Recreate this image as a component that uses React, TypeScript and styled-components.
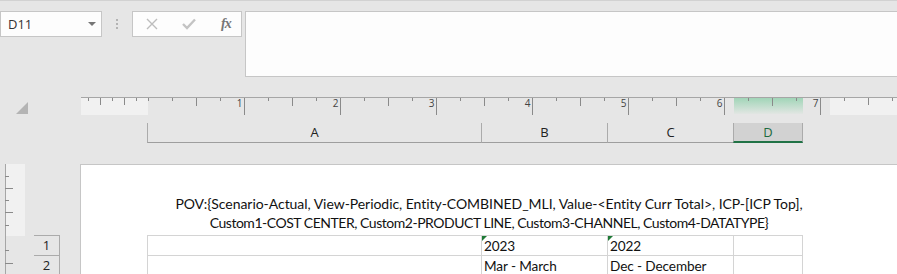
import React from 'react';
import styled, { createGlobalStyle, css } from 'styled-components';

const GlobalStyle = createGlobalStyle`
  html, body {
    margin: 0;
    padding: 0;
    background: #e6e6e6;
    overflow: hidden;
  }
  body {
    font-family: "Open Sans", "Noto Sans", sans-serif;
    color: #222;
  }
`;

const Window = styled.div`
  width: 897px;
  height: 274px;
  border-top: 1px solid #d2d2d2;
  box-sizing: border-box;
  background: #e6e6e6;
  overflow: hidden;
`;

// ---- formula bar ----

const FormulaBar = styled.div`
  display: flex;
  align-items: flex-start;
  padding-top: 10px;
`;

const Box = css`
  box-sizing: border-box;
  height: 26px;
  border: 1px solid #c6c6c6;
  background: #fdfdfd;
`;

const NameBox = styled.div`
  ${Box};
  width: 102px;
  display: flex;
  align-items: center;
  justify-content: space-between;
  padding: 0 5px 0 7px;
  font-size: 13px;
  color: #333;
`;

const Caret = styled.span`
  width: 0;
  height: 0;
  border-left: 4px solid transparent;
  border-right: 4px solid transparent;
  border-top: 4px solid #767676;
  margin-top: -1px;
`;

const Grip = styled.div`
  width: 30px;
  height: 26px;
  display: flex;
  flex-direction: column;
  align-items: center;
  padding-top: 8px;
  box-sizing: border-box;
  gap: 2px;
`;

const GripDot = styled.span`
  width: 2px;
  height: 2px;
  background: #b3b3b3;
`;

const FxButtons = styled.div`
  ${Box};
  width: 110px;
  display: flex;
  align-items: center;
  padding-left: 13px;
  gap: 24px;
`;

const FxLabel = styled.span`
  font-family: "Liberation Serif", "DejaVu Serif", serif;
  font-style: italic;
  font-weight: bold;
  font-size: 14px;
  color: #767676;
  letter-spacing: -1px;
  margin-left: 1px;
`;

const FormulaInput = styled.div`
  ${Box};
  height: 66px;
  flex: 1;
  margin-left: 3px;
  border-right: none;
`;

// ---- ruler & column headers ----

const RulerRow = styled.div`
  display: flex;
  margin-top: 20px;
  height: 18px;
`;

const Corner = styled.div`
  width: 81px;
  padding: 5px 0 0 16px;
  box-sizing: border-box;
`;

const SelectAll = styled.div`
  width: 0;
  height: 0;
  border-left: 12px solid transparent;
  border-bottom: 12px solid #b4b4b4;
`;

const ColumnHeaders = styled.div`
  display: flex;
  margin-top: 8px;
  height: 20px;
  padding-left: 147px;
`;

const ColHeader = styled.div<{ $w: number; $selected?: boolean }>`
  box-sizing: border-box;
  width: ${(p) => p.$w}px;
  border-left: 1px solid #ababab;
  border-bottom: ${(p) => (p.$selected ? '2px solid #217346' : '1px solid #9e9e9e')};
  border-right: ${(p) => (p.$selected ? '1px solid #ababab' : 'none')};
  background: ${(p) => (p.$selected ? '#d2d2d2' : 'transparent')};
  color: ${(p) => (p.$selected ? '#1d6b40' : '#222')};
  font-size: 13px;
  display: flex;
  align-items: center;
  justify-content: center;
  padding-bottom: ${(p) => (p.$selected ? 0 : 1)}px;
`;

// ---- sheet ----

const SheetArea = styled.div`
  display: flex;
  height: 131px;
`;

const RowHeaders = styled.div`
  width: 26px;
  padding-top: 92px;
  display: flex;
  flex-direction: column;
`;

const RowHeader = styled.div`
  box-sizing: border-box;
  height: 20px;
  border-top: 1px solid #ababab;
  border-right: 1px solid #ababab;
  font-size: 13px;
  display: flex;
  align-items: center;
  justify-content: center;
  color: #222;
`;

const Page = styled.div`
  flex: 1;
  margin: 21px 0 0 20px;
  background: #fff;
  border-left: 1px solid #c6c6c6;
  border-top: 1px solid #c6c6c6;
  padding-left: 66px;
  font-family: "Lato", "Open Sans", sans-serif;
  font-size: 14px;
  color: #111;
`;

const PageHeader = styled.div`
  width: 684px;
  height: 70px;
  box-sizing: border-box;
  padding-top: 29px;
  text-align: center;
  line-height: 19px;
`;

const HeaderLine = styled.div<{ $spacing: number }>`
  letter-spacing: ${(p) => p.$spacing}px;
  white-space: nowrap;
`;

const GridRow = styled.div`
  display: flex;
  height: 20px;
`;

const Cell = styled.div<{ $w: number; $last?: boolean; $note?: boolean }>`
  position: relative;
  box-sizing: border-box;
  width: ${(p) => p.$w}px;
  border-left: 1px solid #d4d4d4;
  border-top: 1px solid #d4d4d4;
  border-right: ${(p) => (p.$last ? '1px solid #d4d4d4' : 'none')};
  padding-left: 2px;
  line-height: 20px;
  font-size: 13.6px;
  letter-spacing: -0.1px;
  white-space: nowrap;

  ${(p) =>
    p.$note &&
    css`
      &::before {
        content: '';
        position: absolute;
        left: 0;
        top: 0;
        border-top: 5px solid #1e7a36;
        border-right: 5px solid transparent;
      }
    `}
`;

const columns = [
  { key: 'A', w: 334 },
  { key: 'B', w: 126 },
  { key: 'C', w: 126 },
  { key: 'D', w: 70 },
];

const rows = [
  ['', '2023', '2022', ''],
  ['', 'Mar - March', 'Dec - December', ''],
];

const HorizontalRuler = () => {
  const origin = 67; // 148 - 81
  const ticks: React.ReactElement[] = [];
  for (let k = 0; k <= 28; k++) {
    const x = origin + k * 24 + 0.5;
    const len = k > 0 && k % 4 === 0 ? 17 : k % 2 === 0 && k > 0 ? 8 : 3;
    ticks.push(<line key={'m' + k} x1={x} y1={1} x2={x} y2={1 + len} stroke="#8a8a8a" />);
    if (k > 0 && k % 4 === 0) {
      ticks.push(
        <text key={'t' + k} x={x - 2} y={10} fontSize={10} textAnchor="end" fill="#444"
          fontFamily='"Open Sans", sans-serif'>
          {k / 4}
        </text>
      );
    }
  }
  for (let j = 1; j <= 5; j++) {
    const x = origin - j * 12 + 0.5;
    ticks.push(<line key={'l' + j} x1={x} y1={1} x2={x} y2={j % 2 === 0 ? 8 : 4} stroke="#8a8a8a" />);
  }
  [763, 787, 811].forEach((x, i) =>
    ticks.push(<line key={'r' + i} x1={x + 0.5} y1={1} x2={x + 0.5} y2={i === 1 ? 8 : 4} stroke="#8a8a8a" />)
  );
  return (
    <svg width={816} height={18}>
      <defs>
        <linearGradient id="sel" x1="0" y1="0" x2="0" y2="1">
          <stop offset="0" stopColor="#9dd4b5" />
          <stop offset="1" stopColor="#e2e6e3" />
        </linearGradient>
      </defs>
      <rect x={0} y={0} width={67} height={18} fill="#f1f1f1" />
      <rect x={749} y={0} width={67} height={18} fill="#f1f1f1" />
      <rect x={653} y={0} width={69} height={17} fill="url(#sel)" />
      <line x1={0} y1={0.5} x2={816} y2={0.5} stroke="#a6a6a6" />
      {ticks}
    </svg>
  );
};

const VerticalRuler = () => {
  const ticks = [
    { y: 33, l: 3 },
    { y: 45, l: 7 },
    { y: 57, l: 3 },
    { y: 69, l: 7 },
    { y: 82, l: 3 },
    { y: 107, l: 3 },
    { y: 120, l: 7 },
  ];
  return (
    <svg width={34} height={131}>
      <rect x={6} y={21} width={19} height={72} fill="#f1f1f1" />
      <line x1={5.5} y1={21} x2={5.5} y2={131} stroke="#a6a6a6" />
      {ticks.map((t) => (
        <line key={t.y} x1={5} y1={t.y + 0.5} x2={6 + t.l} y2={t.y + 0.5} stroke="#8a8a8a" />
      ))}
    </svg>
  );
};

const App = () => {
  return (
    <Window>
      <GlobalStyle />
      <FormulaBar>
        <NameBox>
          <span>D11</span>
          <Caret />
        </NameBox>
        <Grip>
          <GripDot />
          <GripDot />
          <GripDot />
        </Grip>
        <FxButtons>
          <svg width={12} height={12} viewBox="0 0 12 12">
            <path d="M1 1 L11 11 M11 1 L1 11" stroke="#bdbdbd" strokeWidth={1.4} fill="none" />
          </svg>
          <svg width={14} height={12} viewBox="0 0 14 12">
            <path d="M1 6 L5 10 L13 1.5" stroke="#c4c4c4" strokeWidth={2.4} fill="none" />
          </svg>
          <FxLabel>fx</FxLabel>
        </FxButtons>
        <FormulaInput />
      </FormulaBar>

      <RulerRow>
        <Corner>
          <SelectAll />
        </Corner>
        <HorizontalRuler />
      </RulerRow>

      <ColumnHeaders>
        {columns.map((c) => (
          <ColHeader key={c.key} $w={c.w} $selected={c.key === 'D'}>
            {c.key}
          </ColHeader>
        ))}
      </ColumnHeaders>

      <SheetArea>
        <VerticalRuler />
        <RowHeaders>
          <RowHeader>1</RowHeader>
          <RowHeader>2</RowHeader>
        </RowHeaders>
        <Page>
          <PageHeader>
            <HeaderLine $spacing={-0.05}>
              POV:{'{'}Scenario-Actual, View-Periodic, Entity-COMBINED_MLI, Value-&lt;Entity Curr Total&gt;, ICP-[ICP Top],
            </HeaderLine>
            <HeaderLine $spacing={-0.47}>
              Custom1-COST CENTER, Custom2-PRODUCT LINE, Custom3-CHANNEL, Custom4-DATATYPE{'}'}
            </HeaderLine>
          </PageHeader>
          {rows.map((r, i) => (
            <GridRow key={i}>
              {r.map((v, j) => (
                <Cell key={j} $w={columns[j].w} $last={j === 3} $note={i === 0 && (j === 1 || j === 2)}>
                  {v}
                </Cell>
              ))}
            </GridRow>
          ))}
        </Page>
      </SheetArea>
    </Window>
  );
};

export default App;
